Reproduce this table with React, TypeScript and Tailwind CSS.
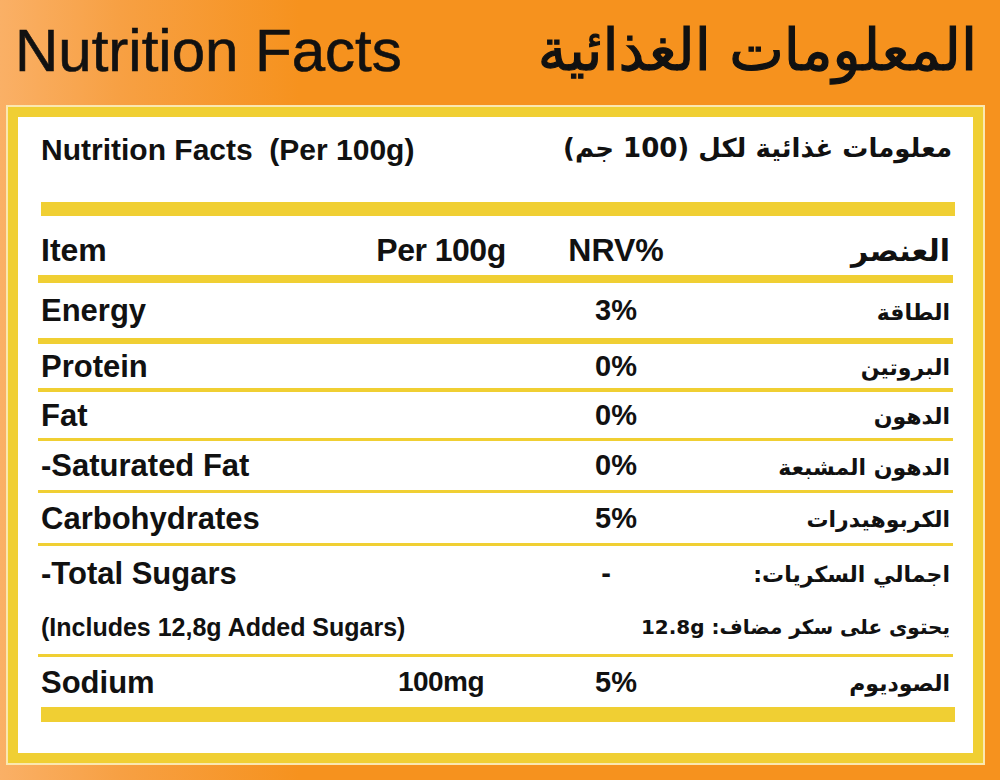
const rows = [
  { en: 'Energy', per: '', nrv: '3%', ar: 'الطاقة', h: 'h-[61px]', line: 'border-b-[6px]' },
  { en: 'Protein', per: '', nrv: '0%', ar: 'البروتين', h: 'h-[48px]', line: 'border-b-4' },
  { en: 'Fat', per: '', nrv: '0%', ar: 'الدهون', h: 'h-[49px]', line: 'border-b-[3px]' },
  { en: '-Saturated Fat', per: '', nrv: '0%', ar: 'الدهون المشبعة', h: 'h-[52px]', line: 'border-b-[3px]' },
  { en: 'Carbohydrates', per: '', nrv: '5%', ar: 'الكربوهيدرات', h: 'h-[53px]', line: 'border-b-[3px]' },
]

const ar = "font-['DejaVu_Sans','Noto_Sans',sans-serif]"

function Row({ en, per, nrv, arText, h, line }: { en: string; per: string; nrv: string; arText: string; h: string; line: string }) {
  return (
    <div className={`grid grid-cols-[303px_200px_150px_1fr] items-center mr-[2px] border-[#f0cf33] ${h} ${line}`}>
      <div className="pl-[3px] text-[31px] font-bold leading-none">{en}</div>
      <div className="text-center text-[28px] font-bold leading-none tracking-[-0.5px]">{per}</div>
      <div className="text-center text-[29px] font-bold leading-none">{nrv}</div>
      <div dir="rtl" className={`pr-[3px] pt-[4px] text-[22px] font-bold leading-none ${ar}`}>{arText}</div>
    </div>
  )
}

export default function App() {
  return (
    <div className="w-[1000px] h-[780px] overflow-hidden bg-[linear-gradient(90deg,#fab066_0%,#f7a043_12%,#f6921e_30%,#f6921e_100%)] text-[#111] font-['Liberation_Sans',Arial,sans-serif]">
      {/* heading */}
      <div className="flex justify-between h-[105px] pl-[15px] pr-[23px] pt-[21px]">
        <h1 className="text-[60px] leading-none font-normal [-webkit-text-stroke:0.6px_#111]">Nutrition Facts</h1>
        <h1 dir="rtl" className={`text-[58px] leading-none font-normal [-webkit-text-stroke:1.2px_#111] ${ar}`}>المعلومات الغذائية</h1>
      </div>

      {/* framed panel */}
      <div className="ml-[6px] w-[979px] h-[660px] border-2 border-[#fbe7b0]">
        <div className="h-full border-[10px] border-[#f0cf33] bg-white pl-[20px] pr-[18px]">
          <div className="flex justify-between h-[85px] pt-[18px]">
            <div className="text-[30px] font-bold leading-none pl-[3px]">Nutrition Facts&nbsp;&nbsp;(Per 100g)</div>
            <div dir="rtl" className={`text-[26px] font-bold leading-none pr-[3px] ${ar}`}>معلومات غذائية لكل (100 جم)</div>
          </div>

          <div className="h-[14px] ml-[3px] bg-[#f0cf33]" />

          {/* header row */}
          <div className="grid grid-cols-[303px_200px_150px_1fr] items-end h-[67px] pb-[9px] mr-[2px] border-b-8 border-[#f0cf33]">
            <div className="pl-[3px] text-[32px] font-bold leading-none">Item</div>
            <div className="text-center text-[32px] font-bold leading-none tracking-[-0.5px]">Per 100g</div>
            <div className="text-center text-[32px] font-bold leading-none">NRV%</div>
            <div dir="rtl" className={`pr-[3px] text-[30px] font-bold leading-none ${ar}`}>العنصر</div>
          </div>

          {rows.map((r) => (
            <Row key={r.en} en={r.en} per={r.per} nrv={r.nrv} arText={r.ar} h={r.h} line={r.line} />
          ))}

          {/* sugars block */}
          <div className="mr-[2px] border-b-[3px] border-[#f0cf33]">
            <div className="grid grid-cols-[303px_200px_150px_1fr] items-center h-[54px]">
              <div className="pl-[3px] text-[31px] font-bold leading-none">-Total Sugars</div>
              <div />
              <div className="text-center text-[29px] font-bold leading-none pr-[20px]">-</div>
              <div dir="rtl" className={`pr-[3px] pt-[4px] text-[22px] font-bold leading-none ${ar}`}>اجمالي السكريات:</div>
            </div>
            <div className="flex justify-between items-center h-[54px]">
              <div className="pl-[3px] text-[25px] font-bold leading-none">(Includes 12,8g Added Sugars)</div>
              <div dir="rtl" className={`pr-[3px] text-[20px] font-bold leading-none ${ar}`}>يحتوى على سكر مضاف: 12.8g</div>
            </div>
          </div>

          <div className="grid grid-cols-[303px_200px_150px_1fr] items-center h-[50px] mr-[2px]">
            <div className="pl-[3px] text-[31px] font-bold leading-none">Sodium</div>
            <div className="text-center text-[28px] font-bold leading-none tracking-[-0.5px]">100mg</div>
            <div className="text-center text-[29px] font-bold leading-none">5%</div>
            <div dir="rtl" className={`pr-[3px] pt-[4px] text-[22px] font-bold leading-none ${ar}`}>الصوديوم</div>
          </div>

          <div className="h-[15px] ml-[3px] bg-[#f0cf33]" />
        </div>
      </div>
    </div>
  )
}
